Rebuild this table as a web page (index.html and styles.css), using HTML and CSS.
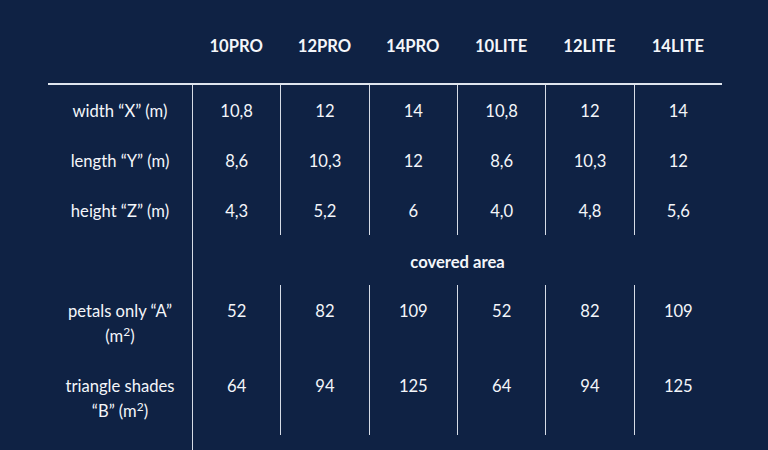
FILE: index.html
```html
<!DOCTYPE html>
<html lang="en">
<head>
<meta charset="utf-8">
<title>Specs</title>
<link rel="stylesheet" href="styles.css">
</head>
<body>
<table class="specs">
  <colgroup>
    <col class="c-label">
    <col class="c-val"><col class="c-val"><col class="c-val">
    <col class="c-val"><col class="c-val"><col class="c-val">
  </colgroup>
  <thead>
    <tr class="head">
      <th class="corner"></th>
      <th>10PRO</th><th>12PRO</th><th>14PRO</th>
      <th>10LITE</th><th>12LITE</th><th>14LITE</th>
    </tr>
  </thead>
  <tbody>
    <tr>
      <td class="label">width “X” (m)</td>
      <td>10,8</td><td>12</td><td>14</td><td>10,8</td><td>12</td><td>14</td>
    </tr>
    <tr>
      <td class="label">length “Y” (m)</td>
      <td>8,6</td><td>10,3</td><td>12</td><td>8,6</td><td>10,3</td><td>12</td>
    </tr>
    <tr>
      <td class="label">height “Z” (m)</td>
      <td>4,3</td><td>5,2</td><td>6</td><td>4,0</td><td>4,8</td><td>5,6</td>
    </tr>
    <tr class="section">
      <td class="label"></td>
      <td colspan="6" class="section-title">covered area</td>
    </tr>
    <tr class="top">
      <td class="label">petals only “A” (m<sup>2</sup>)</td>
      <td>52</td><td>82</td><td>109</td><td>52</td><td>82</td><td>109</td>
    </tr>
    <tr class="top">
      <td class="label">triangle shades “B” (m<sup>2</sup>)</td>
      <td>64</td><td>94</td><td>125</td><td>64</td><td>94</td><td>125</td>
    </tr>
    <tr class="tail">
      <td class="label"></td>
      <td class="first"></td><td></td><td></td><td></td><td></td><td></td>
    </tr>
  </tbody>
</table>
</body>
</html>
```
FILE: styles.css
```css
html, body {
  margin: 0;
  padding: 0;
  background: #0f2244;
  height: 100%;
  overflow: hidden;
}

body {
  font-family: Lato, "Open Sans", Arial, sans-serif;
  font-size: 16.6px;
  color: #f4f6fa;
}

.specs {
  margin-left: 48px;
  width: 674px;
  table-layout: fixed;
  border-collapse: separate;
  border-spacing: 0;
}

.c-label { width: 144px; }

.specs th,
.specs td {
  text-align: center;
  line-height: 25px;
  padding: 14px 0 11px;
  vertical-align: top;
}

.head th {
  font-weight: 700;
  padding: 34px 0 24px;
  border-bottom: 2px solid #dfe5ee;
}

.specs td {
  border-left: 1px solid #d6dce6;
}

.specs td.label {
  border-left: none;
  padding-left: 12px;
  padding-right: 12px;
}

.section td.section-title {
  font-weight: 700;
  padding-top: 15px;
  padding-bottom: 10px;
}

.tail td {
  border-left: none;
  padding: 0;
  height: 20px;
}

.tail td.first {
  border-left: 1px solid #d6dce6;
}

sup {
  font-size: 12px;
  line-height: 0;
  vertical-align: 6px;
}
```
